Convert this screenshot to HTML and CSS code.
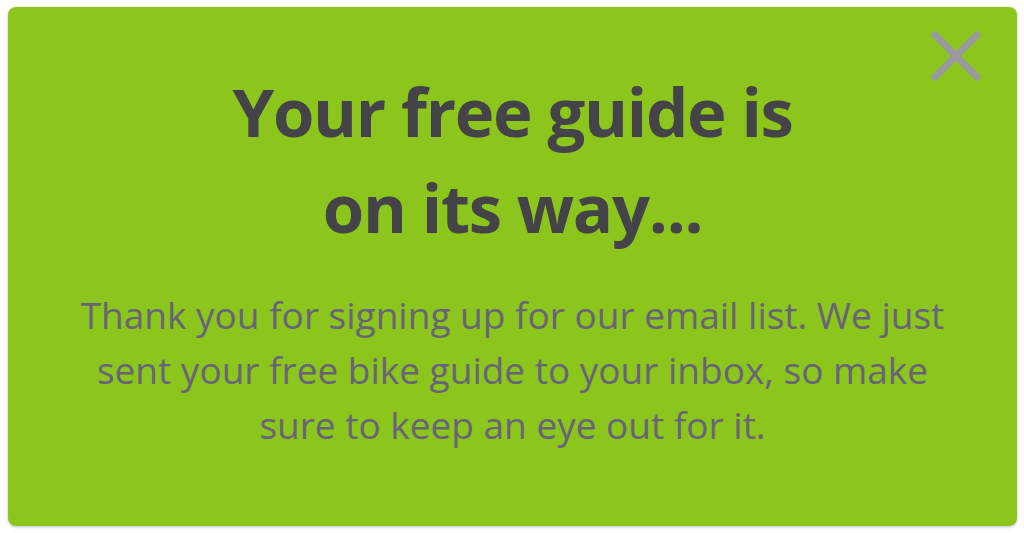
FILE: index.html
```html
<!DOCTYPE html>
<html lang="en">
<head>
<meta charset="utf-8">
<title>Thank you</title>
<link rel="stylesheet" href="styles.css">
</head>
<body>
<div class="card">
  <button class="close" aria-label="Close">
    <svg width="52" height="52" viewBox="0 0 52 52"><path d="M5 5 L47 47 M47 5 L5 47" stroke="#9a999e" stroke-width="7" stroke-linecap="round" fill="none"/></svg>
  </button>
  <h1 class="title">Your free guide is<br>on its way...</h1>
  <p class="text">Thank you for signing up for our email list. We just sent your free bike guide to your inbox, so make sure to keep an eye out for it.</p>
</div>
</body>
</html>
```

FILE: styles.css
```css
html, body { margin: 0; padding: 0; background: #fff; }
body { padding: 7px 7px 7px 8px; }
.card {
  position: relative;
  box-sizing: border-box;
  height: 519px;
  background: #8cc51b;
  border-radius: 8px;
  box-shadow: 0 1px 3px rgba(0,0,0,0.25);
  display: flex;
  flex-direction: column;
  align-items: center;
  padding-top: 56px;
  font-family: "Open Sans", sans-serif;
}
.close {
  position: absolute;
  top: 23px;
  right: 35px;
  width: 52px;
  height: 52px;
  padding: 0;
  border: 0;
  background: none;
  display: flex;
}
.title {
  margin: 0;
  font-size: 67px;
  line-height: 96px;
  font-weight: 700;
  color: #444347;
  text-align: center;
  letter-spacing: -1.3px;
}
.text {
  margin: 32px 0 0;
  width: 890px;
  font-size: 37px;
  line-height: 55px;
  color: #686478;
  text-align: center;
}
```
